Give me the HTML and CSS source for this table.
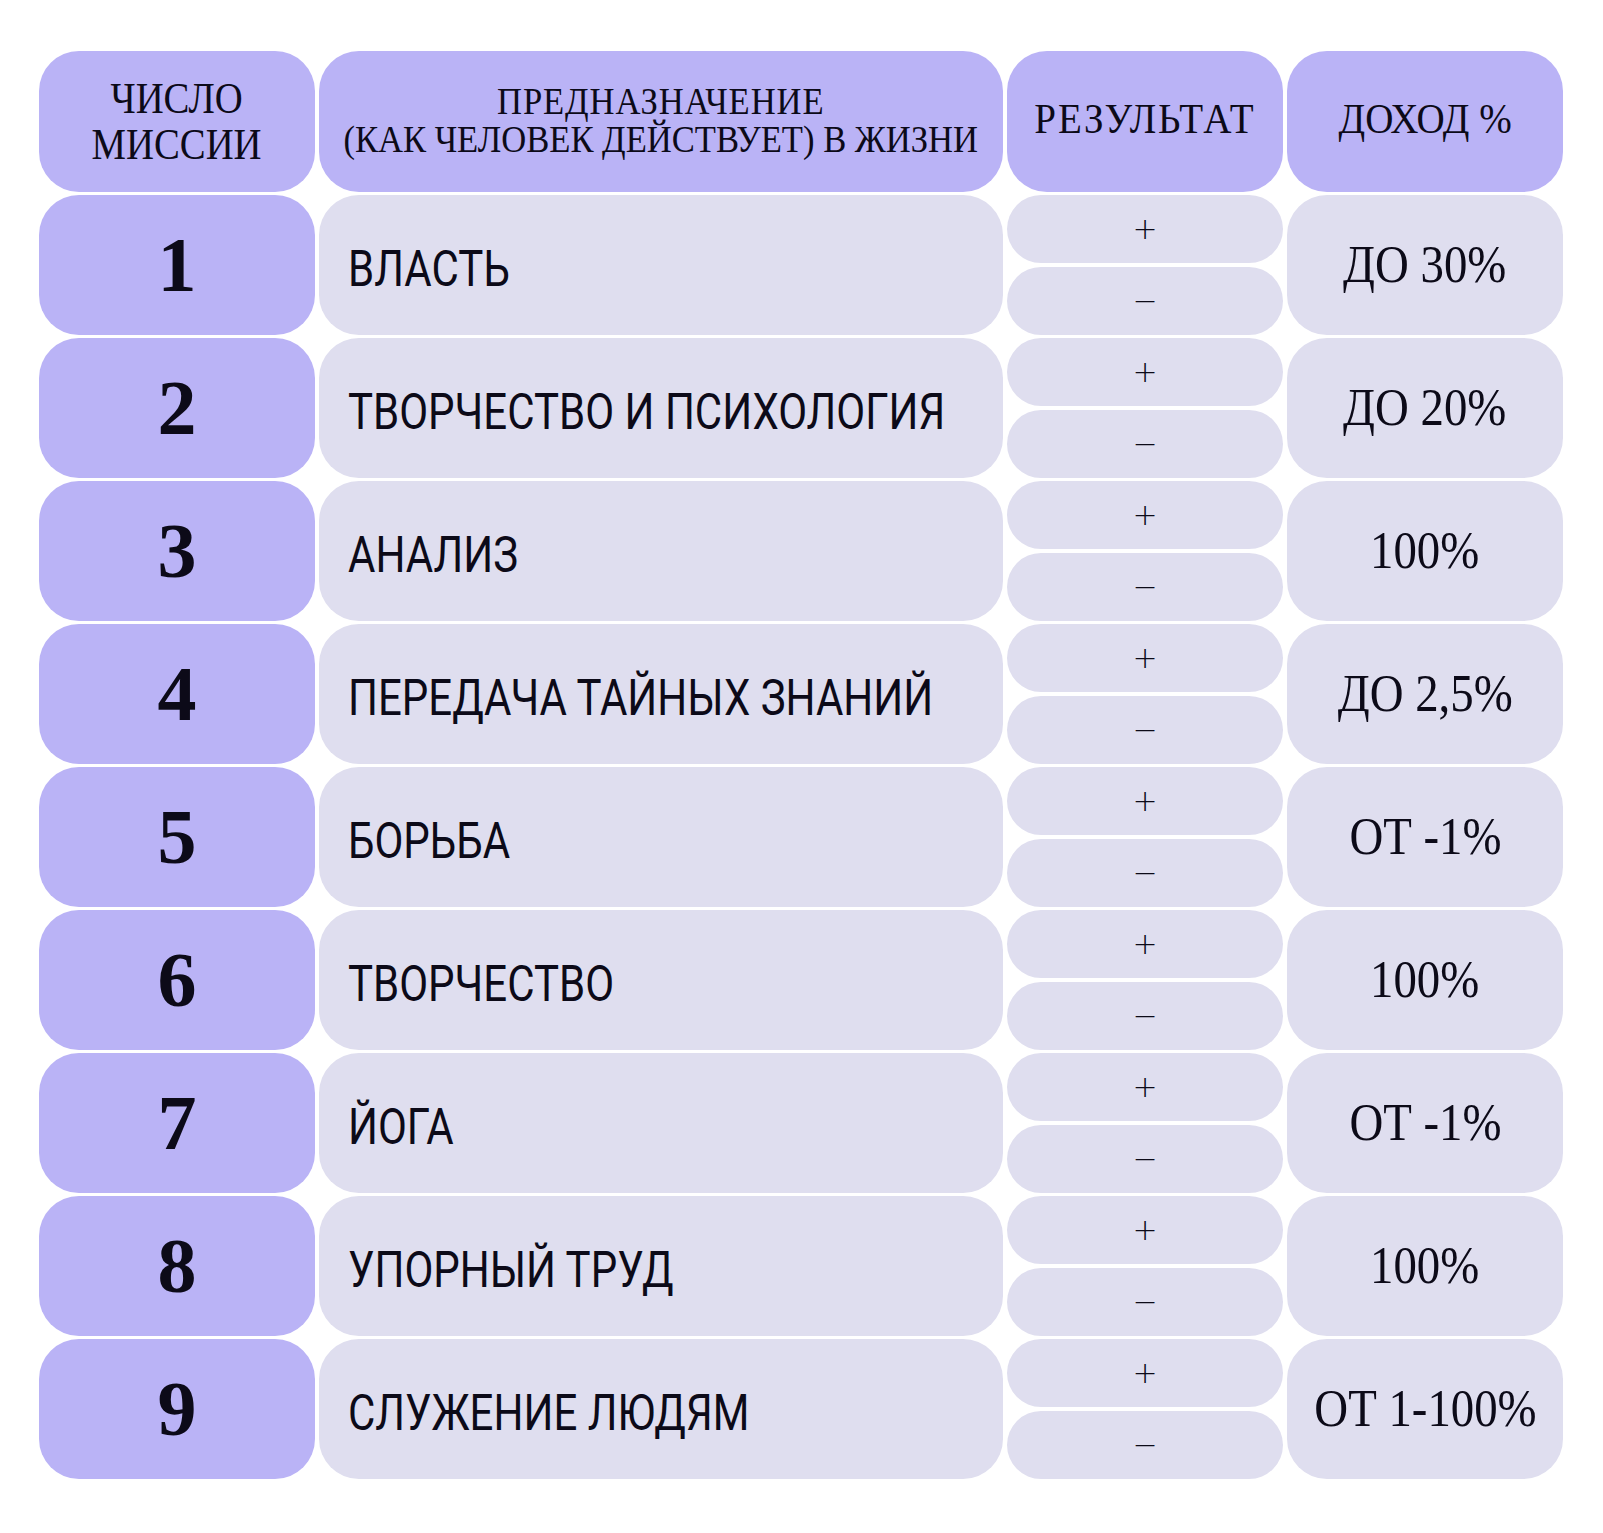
FILE: index.html
```html
<!DOCTYPE html>
<html lang="ru">
<head>
<meta charset="utf-8">
<title>Число миссии</title>
<link rel="stylesheet" href="styles.css">
</head>
<body>
<div class="page">
  <div class="table">
    <div class="cell head"><span class="serif h1">ЧИСЛО<br>МИССИИ</span></div>
    <div class="cell head"><span class="serif h2"><span class="h2a">ПРЕДНАЗНАЧЕНИЕ</span><br>(КАК ЧЕЛОВЕК ДЕЙСТВУЕТ) В ЖИЗНИ</span></div>
    <div class="cell head"><span class="serif h3 wide">РЕЗУЛЬТАТ</span></div>
    <div class="cell head"><span class="serif h3">ДОХОД %</span></div>

    <div class="cell num"><span class="serif n">1</span></div>
    <div class="cell name"><span class="sans">ВЛАСТЬ</span></div>
    <div class="res"><div class="pill">+</div><div class="pill">−</div></div>
    <div class="cell val"><span class="serif v">ДО 30%</span></div>

    <div class="cell num"><span class="serif n">2</span></div>
    <div class="cell name"><span class="sans">ТВОРЧЕСТВО И ПСИХОЛОГИЯ</span></div>
    <div class="res"><div class="pill">+</div><div class="pill">−</div></div>
    <div class="cell val"><span class="serif v">ДО 20%</span></div>

    <div class="cell num"><span class="serif n">3</span></div>
    <div class="cell name"><span class="sans">АНАЛИЗ</span></div>
    <div class="res"><div class="pill">+</div><div class="pill">−</div></div>
    <div class="cell val"><span class="serif v">100%</span></div>

    <div class="cell num"><span class="serif n">4</span></div>
    <div class="cell name"><span class="sans">ПЕРЕДАЧА ТАЙНЫХ ЗНАНИЙ</span></div>
    <div class="res"><div class="pill">+</div><div class="pill">−</div></div>
    <div class="cell val"><span class="serif v">ДО 2,5%</span></div>

    <div class="cell num"><span class="serif n">5</span></div>
    <div class="cell name"><span class="sans">БОРЬБА</span></div>
    <div class="res"><div class="pill">+</div><div class="pill">−</div></div>
    <div class="cell val"><span class="serif v">ОТ -1%</span></div>

    <div class="cell num"><span class="serif n">6</span></div>
    <div class="cell name"><span class="sans">ТВОРЧЕСТВО</span></div>
    <div class="res"><div class="pill">+</div><div class="pill">−</div></div>
    <div class="cell val"><span class="serif v">100%</span></div>

    <div class="cell num"><span class="serif n">7</span></div>
    <div class="cell name"><span class="sans">ЙОГА</span></div>
    <div class="res"><div class="pill">+</div><div class="pill">−</div></div>
    <div class="cell val"><span class="serif v">ОТ -1%</span></div>

    <div class="cell num"><span class="serif n">8</span></div>
    <div class="cell name"><span class="sans">УПОРНЫЙ ТРУД</span></div>
    <div class="res"><div class="pill">+</div><div class="pill">−</div></div>
    <div class="cell val"><span class="serif v">100%</span></div>

    <div class="cell num"><span class="serif n">9</span></div>
    <div class="cell name"><span class="sans">СЛУЖЕНИЕ ЛЮДЯМ</span></div>
    <div class="res"><div class="pill">+</div><div class="pill">−</div></div>
    <div class="cell val"><span class="serif v">ОТ 1-100%</span></div>
  </div>
</div>
</body>
</html>
```

FILE: styles.css
```css
html, body {
  margin: 0;
  padding: 0;
  background: #ffffff;
}

.page {
  padding: 51px 0 0 39px;
  color: #0c0a18;
}

.table {
  display: grid;
  grid-template-columns: 276px 684px 276px 276px;
  grid-template-rows: 141px repeat(9, 140px);
  column-gap: 4px;
  row-gap: 3px;
}

.cell {
  border-radius: 40px;
  display: flex;
  align-items: center;
  justify-content: center;
  text-align: center;
  min-width: 0;
}

.head,
.num {
  background: #bab3f6;
}

.name,
.val,
.pill {
  background: #dfdeef;
}

.name {
  justify-content: flex-start;
  padding-left: 29px;
}

.res {
  display: flex;
  flex-direction: column;
  gap: 4px;
}

.pill {
  flex: 1;
  border-radius: 34px;
  display: flex;
  align-items: center;
  justify-content: center;
  font-family: "DejaVu Sans", sans-serif;
  font-weight: 300;
  font-size: 30px;
  line-height: 1;
}

.serif {
  font-family: "Liberation Serif", "DejaVu Serif", serif;
  display: inline-block;
  white-space: nowrap;
  flex-shrink: 0;
}

.h1 {
  font-size: 44px;
  line-height: 46px;
  transform: scaleX(0.88);
}

.h2 {
  font-size: 38px;
  line-height: 38px;
  transform: scaleX(0.91) translateY(-2px);
}

.h2a {
  letter-spacing: 1px;
}

.h3 {
  font-size: 42px;
  line-height: 1;
  transform: scaleX(0.93) translateY(-3px);
}

.wide {
  letter-spacing: 2px;
}

.n {
  font-size: 78px;
  font-weight: 700;
  line-height: 1;
}

.v {
  font-size: 52px;
  line-height: 1;
  transform: scaleX(0.9);
}

.sans {
  font-family: "Roboto", "Open Sans", sans-serif;
  font-weight: 400;
  font-size: 50px;
  line-height: 1;
  display: inline-block;
  transform: scaleX(0.84) translateY(4px);
  transform-origin: left center;
  white-space: nowrap;
}
```
